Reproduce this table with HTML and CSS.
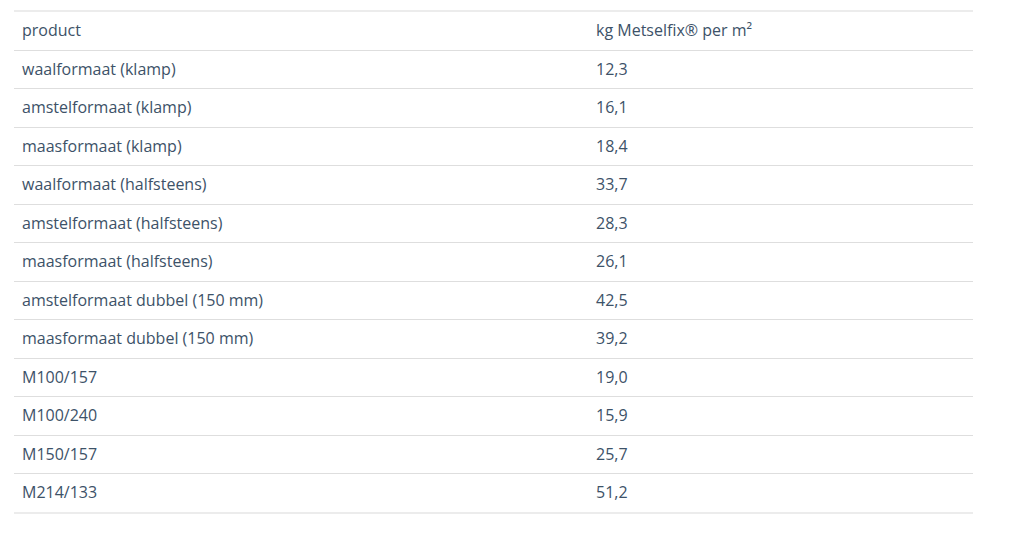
FILE: index.html
```html
<!DOCTYPE html>
<html>
<head>
<meta charset="utf-8">
<link rel="stylesheet" href="styles.css">
</head>
<body>
<div class="wrap">
<table class="tbl">
<thead>
<tr><th class="c1">product</th><th>kg Metselfix® per m²</th></tr>
</thead>
<tbody>
<tr><td class="c1">waalformaat (klamp)</td><td>12,3</td></tr>
<tr><td class="c1">amstelformaat (klamp)</td><td>16,1</td></tr>
<tr><td class="c1">maasformaat (klamp)</td><td>18,4</td></tr>
<tr><td class="c1">waalformaat (halfsteens)</td><td>33,7</td></tr>
<tr><td class="c1">amstelformaat (halfsteens)</td><td>28,3</td></tr>
<tr><td class="c1">maasformaat (halfsteens)</td><td>26,1</td></tr>
<tr><td class="c1">amstelformaat dubbel (150 mm)</td><td>42,5</td></tr>
<tr><td class="c1">maasformaat dubbel (150 mm)</td><td>39,2</td></tr>
<tr><td class="c1">M100/157</td><td>19,0</td></tr>
<tr><td class="c1">M100/240</td><td>15,9</td></tr>
<tr><td class="c1">M150/157</td><td>25,7</td></tr>
<tr><td class="c1">M214/133</td><td>51,2</td></tr>
</tbody>
</table>
</div>
</body>
</html>
```
FILE: styles.css
```css
html, body {
  margin: 0;
  padding: 0;
  background: #fff;
}
.wrap {
  padding: 10px 0 0 14px;
}
.tbl {
  width: 959px;
  border-collapse: collapse;
  font-family: "Open Sans", "Noto Sans", sans-serif;
  font-size: 16px;
  color: #3d5268;
  border-top: 2px solid #ececec;
  border-bottom: 2px solid #ececec;
}
.tbl th,
.tbl td {
  text-align: left;
  font-weight: normal;
  padding: 8px 8px;
  line-height: 21.5px;
  border-bottom: 1px solid #dedede;
}
.tbl .c1 {
  width: 558px;
}
```
